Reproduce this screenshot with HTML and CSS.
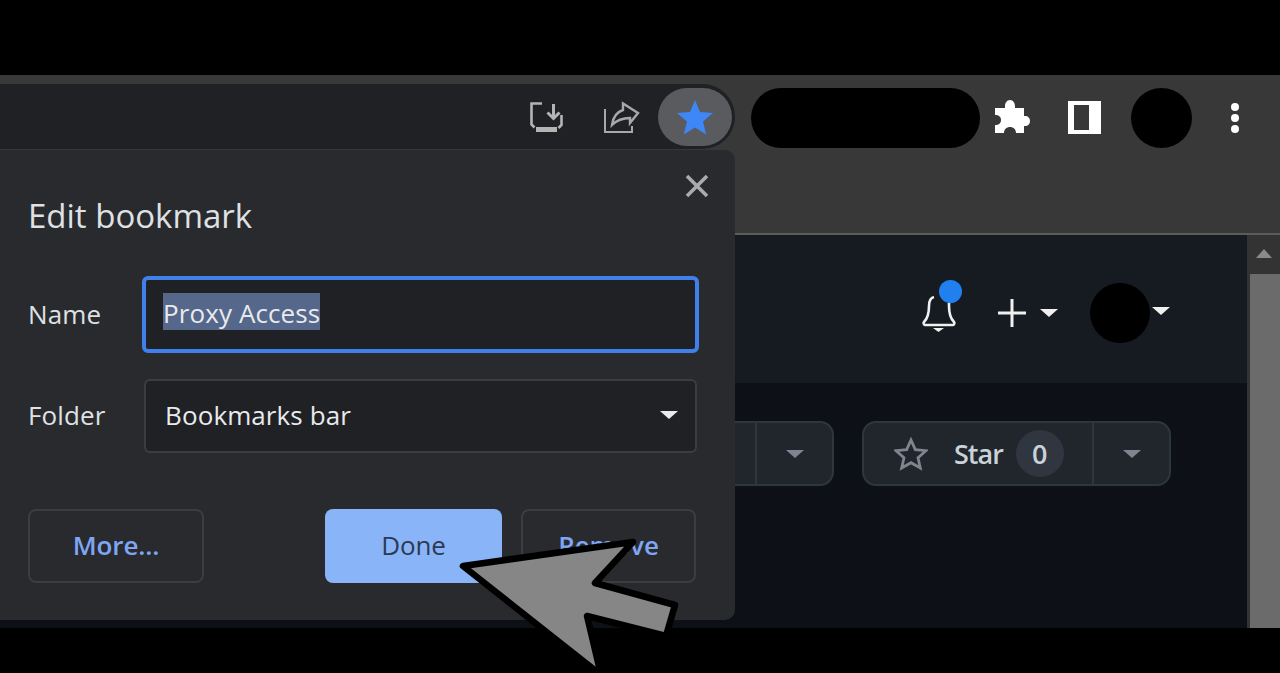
FILE: index.html
```html
<!DOCTYPE html>
<html lang="en">
<head>
<meta charset="utf-8">
<title>Edit bookmark</title>
<link rel="stylesheet" href="styles.css">
</head>
<body>
<div class="top-mask"></div>
<div class="browser">
  <div class="toolbar">
    <div class="omnibox">
      <svg class="tool-icon" viewBox="0 0 36 36" width="36" height="36"><path d="M14 4.500H3.500v21l3 3M33.500 16v10l-3 3" fill="none" stroke="#b4b4b4" stroke-width="2.600"/><path d="M8 28h21v5H8z" fill="#b4b4b4"/><path d="M25.500 5v14M19.500 13.500l6 6 6-6" fill="none" stroke="#b4b4b4" stroke-width="3"/></svg>
      <svg class="tool-icon" viewBox="0 0 38 36" width="38" height="36"><path d="M3 10v23h27v-6" fill="none" stroke="#a8a8a8" stroke-width="2"/><path d="M10 26C11 18 15 13 21 11V4.500L36 14 28 24V19C21 19 15 21 10 26z" fill="none" stroke="#a8a8a8" stroke-width="2.400"/></svg>
      <div class="star-btn"><svg viewBox="0 0 36 36" width="36" height="36"><path d="M18 1l5 12 13 1-10 8.500 3.200 13L18 28.500 6.800 35.500 10 22.500 0 14l13-1z" fill="#3f86f7"/></svg></div>
    </div>
    <div class="pill"></div>
    <svg class="puzzle" viewBox="0 0 36 36" width="36" height="36"><path d="M11 6c0-3 2-6 5-6s5 3 5 6v2h9v8h1c3 0 5 2 5 5s-2 5-5 5h-1v7h-8c0-4-3-6-6-6s-6 2-6 6H1v-8c4 0 6-2 6-5s-2-5-6-5V8h10z" fill="#fff"/></svg>
    <div class="side-panel"><span></span></div>
    <div class="profile"></div>
    <div class="dots"><i></i><i></i><i></i></div>
  </div>
  <div class="bookmarks"></div>
  <main class="content">
    <div class="viewport">
      <header class="site-header">
        <span class="bell">
          <svg viewBox="0 0 36 40" width="36" height="40"><path d="M13 4C9 5 8 8 8 13c0 8-1 12-5 16-1 1 0 3 1 3h28c1 0 2-2 1-3-4-4-5-8-5-16v-3" fill="none" stroke="#f0f0f0" stroke-width="2.600"/><path d="M12 35h11l-5.500 4z" fill="#f0f0f0"/></svg>
          <b class="dot"></b>
        </span>
        <svg class="plus" viewBox="0 0 28 28" width="28" height="28"><path d="M14 0v28M0 14h28" stroke="#f0f0f0" stroke-width="3"/></svg>
        <i class="caret caret-light"></i>
        <span class="avatar"></span>
        <i class="caret caret-light caret-avatar"></i>
      </header>
      <div class="repo-actions">
        <div class="group group-fork">
          <span class="group-main"></span>
          <span class="group-drop"><i class="caret caret-dim"></i></span>
        </div>
        <div class="group group-star">
          <span class="group-main star-main">
            <svg viewBox="0 0 34 34" width="34" height="34"><path d="M17 3l4.300 9.600 10.700 1.100-8 7 2.300 10.300-9.300-5.300L7.700 31 10 20.700l-8-7 10.700-1.100z" fill="none" stroke="#7d8590" stroke-width="2.800"/></svg>
            <span class="star-label">Star</span>
            <span class="count">0</span>
          </span>
          <span class="group-drop"><i class="caret caret-dim"></i></span>
        </div>
      </div>
    </div>
    <div class="scrollbar">
      <div class="scroll-up"><i></i></div>
      <div class="scroll-thumb"></div>
    </div>
  </main>
</div>
<div class="bottom-mask"></div>

<section class="dialog">
  <svg class="close" viewBox="0 0 24 24" width="24" height="24"><path d="M2 2l20 20M22 2L2 22" stroke="#a9abae" stroke-width="3.600"/></svg>
  <h1 class="dialog-title">Edit bookmark</h1>
  <div class="field name-field">
    <span class="field-label">Name</span>
    <div class="input"><span class="selected">Proxy Access</span></div>
  </div>
  <div class="field folder-field">
    <span class="field-label">Folder</span>
    <div class="select"><span>Bookmarks bar</span><i class="caret caret-white"></i></div>
  </div>
  <div class="dialog-actions">
    <span class="btn btn-more">More...</span>
    <span class="btn btn-done">Done</span>
    <span class="btn btn-remove">Remove</span>
  </div>
</section>

<svg class="cursor" viewBox="440 520 260 153" width="260" height="153"><path d="M463 566L633 542 595 583 675 605 666 636 587 616 601 675z" fill="#868686" stroke="#000" stroke-width="6.500" stroke-linejoin="round"/></svg>
</body>
</html>
```
FILE: styles.css
```css
* { box-sizing: border-box; }
html, body { margin: 0; height: 673px; overflow: hidden; background: #000; }
body { position: relative; font-family: "Open Sans", "Noto Sans", sans-serif; color: #e8eaed; }
.top-mask { height: 75px; background: #000; }
.bottom-mask { height: 45px; background: #000; }
.browser { height: 553px; display: flex; flex-direction: column; background: #383838; }
.toolbar { height: 75px; flex: none; display: flex; align-items: flex-start; padding-top: 9px; }
.omnibox { width: 735px; height: 65px; flex: none; display: flex; align-items: center; justify-content: flex-end; background: #202124; border-radius: 0 33px 33px 0; padding-right: 3px; }
.tool-icon { flex: none; margin-right: 38px; }
.star-btn { width: 74px; height: 58px; border-radius: 29px; background: #5a5b5e; display: flex; align-items: center; justify-content: center; margin-left: -20px; }
.pill { width: 229px; height: 60px; flex: none; margin: 4px 0 0 16px; border-radius: 30px; background: #000; }
.puzzle { flex: none; margin: 16px 0 0 14px; }
.side-panel { width: 33px; height: 33px; flex: none; margin: 17px 0 0 38px; background: #fff; display: flex; padding: 4px 12px 4px 6px; }
.side-panel span { flex: 1; background: #383838; }
.profile { width: 61px; height: 60px; flex: none; margin: 4px 0 0 30px; border-radius: 50%; background: #000; }
.dots { flex: none; display: flex; flex-direction: column; gap: 3px; margin: 19px 0 0 39px; }
.dots i { display: block; width: 8px; height: 8px; border-radius: 50%; background: #fff; }
.bookmarks { height: 85px; flex: none; border-bottom: 2px solid #5c5c5c; }
.content { flex: 1; min-height: 0; display: flex; }
.viewport { flex: 1; display: flex; flex-direction: column; background: #0d1117; }
.site-header { height: 148px; flex: none; background: #161b22; display: flex; align-items: center; justify-content: flex-end; padding: 8px 77px 0 0; }
.bell { position: relative; width: 36px; height: 40px; display: block; margin-right: 41px; }
.bell svg { display: block; }
.dot { position: absolute; left: 18px; top: -13px; width: 23px; height: 23px; border-radius: 50%; background: #2180f0; }
.plus { flex: none; margin-right: 14px; }
.caret { display: block; width: 0; height: 0; border-left: 9px solid transparent; border-right: 9px solid transparent; border-top: 8px solid #fff; }
.caret-light { border-top-color: #f0f0f0; }
.caret-avatar { margin: -5px 0 0 2px; }
.avatar { width: 60px; height: 60px; border-radius: 50%; background: #000; margin-left: 32px; }
.caret-dim { border-top-color: #7d8590; }
.caret-white { border-top-color: #e8eaed; }
.repo-actions { display: flex; justify-content: flex-end; gap: 28px; padding: 38px 76px 0 0; }
.group { height: 65px; display: flex; background: #21262d; border: 2px solid #30363d; border-radius: 14px; }
.group-fork { width: 200px; }
.group-star { width: 309px; }
.group-main { flex: 1; display: flex; align-items: center; }
.group-drop { width: 77px; flex: none; display: flex; align-items: center; justify-content: center; border-left: 2px solid #30363d; }
.star-main { padding-left: 30px; }
.star-label { margin-left: 26px; font-size: 27px; font-weight: 600; color: #c9d1d9; letter-spacing: -1px; }
.count { width: 48px; height: 47px; margin-left: 13px; border-radius: 50%; background: #2f3640; display: flex; align-items: center; justify-content: center; font-size: 27px; font-weight: 600; color: #c9d1d9; }
.scrollbar { width: 33px; flex: none; background: #333; padding-left: 3px; }
.scroll-up { height: 39px; margin-left: -3px; background: #333; display: flex; justify-content: center; padding-top: 14px; }
.scroll-up i { display: block; width: 0; height: 0; border-left: 8px solid transparent; border-right: 8px solid transparent; border-bottom: 9px solid #8a8a8a; }
.scroll-thumb { height: 354px; background: #6b6b6b; }
.dialog { position: absolute; left: 0; top: 150px; width: 735px; height: 470px; background: #292a2d; border-radius: 0 10px 10px 0; padding: 0 38px 0 28px; display: flex; flex-direction: column; }
.close { position: absolute; right: 26px; top: 24px; }
.dialog-title { margin: 44px 0 0; height: 44px; font-size: 33px; line-height: 44px; font-weight: 400; color: #dfe1e4; }
.field { display: flex; align-items: center; font-size: 26px; letter-spacing: .1px; }
.name-field { margin: 38px -2px 0 0; height: 77px; }
.folder-field { margin-top: 26px; height: 74px; }
.field-label { width: 115px; flex: none; color: #dfe1e4; position: relative; top: -1px; }
.name-field .field-label { width: 115px; margin-right: -1px; }
.input { flex: 1; height: 77px; background: #202124; border: 4px solid #3f80ea; border-radius: 6px; padding: 0 0 6px 17px; display: flex; align-items: center; }
.selected { height: 37px; line-height: 41px; background: #55678a; color: #e8eaed; }
.select { flex: 1; height: 74px; margin-left: 1px; background: #202124; border: 2px solid #3c3d40; border-radius: 6px; padding: 0 17px 2px 19px; display: flex; align-items: center; justify-content: space-between; color: #e8eaed; }
.dialog-actions { display: flex; margin-top: 56px; gap: 19px; }
.btn { height: 74px; border-radius: 8px; display: flex; align-items: center; justify-content: center; padding-bottom: 2px; font-size: 26px; font-weight: 600; letter-spacing: -.1px; }
.btn-more { width: 176px; margin-right: 102px; border: 2px solid #3c3d40; color: #7ea6f4; }
.btn-done { width: 177px; background: #8ab4f8; color: #2c3a55; font-weight: 500; }
.btn-remove { width: 175px; border: 2px solid #3c3d40; color: #7ea6f4; }
.cursor { position: absolute; left: 440px; top: 520px; }
```
